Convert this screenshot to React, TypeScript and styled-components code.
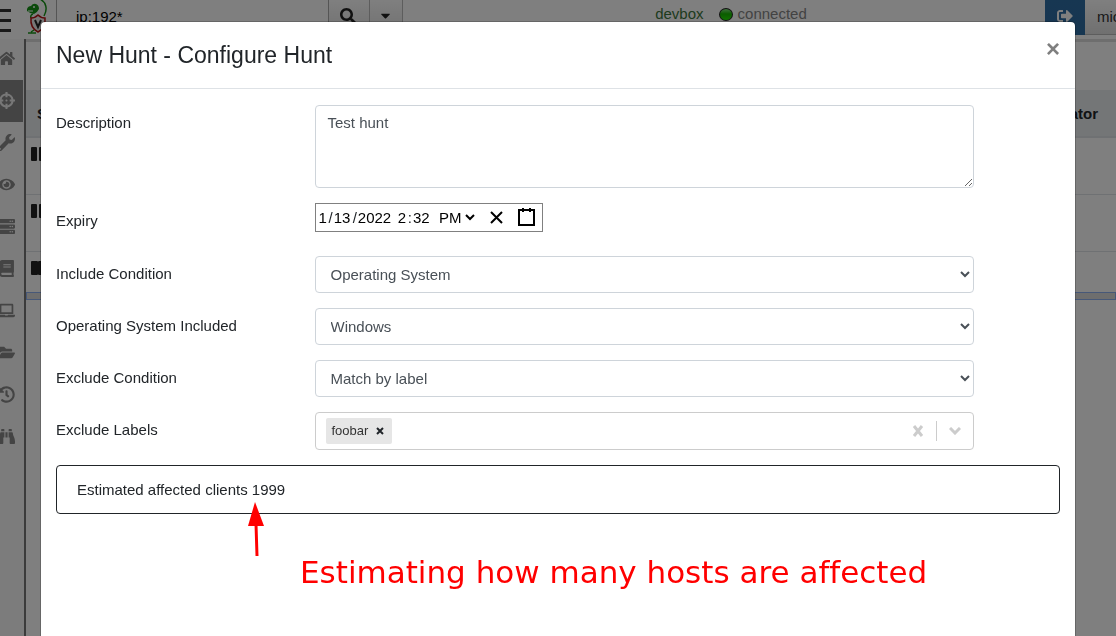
import React from "react";
import styled, { createGlobalStyle } from "styled-components";
import type { IconType } from "react-icons";
import {
  FaHome, FaCrosshairs, FaWrench, FaEye, FaServer, FaBook, FaLaptop,
  FaFolderOpen, FaHistory, FaBinoculars, FaSearch, FaSignOutAlt, FaCaretDown,
} from "react-icons/fa";

const GlobalStyle = createGlobalStyle`
  *, *::before, *::after { box-sizing: border-box; }
  body {
    margin: 0;
    overflow: hidden;
    background: #fff;
    color: #212529;
    font: 15px/22px "Liberation Sans", Arial, sans-serif;
  }
  button, input, select, textarea { font: inherit; }
`;

const Page = styled.div`
  display: flex;
  flex-direction: column;
  height: 100vh;
  overflow: hidden;
`;

const NavBar = styled.header`
  display: flex;
  align-items: flex-start;
  flex: none;
  height: 39px;
  background: #fff;
`;

const MenuButton = styled.button`
  display: flex;
  flex-direction: column;
  gap: 7px;
  width: 26px;
  height: 39px;
  padding: 9px 0 0;
  border: 0;
  background: none;
`;

const MenuBar = styled.span`
  width: 11px;
  height: 3px;
  background: #333;
`;

const LogoBox = styled.div`
  width: 30px;
  height: 36px;
`;

const SearchGroup = styled.form`
  display: flex;
  width: 347px;
  height: 36px;
`;

const SearchInput = styled.input`
  flex: 1;
  min-width: 0;
  padding: 0 19px 2px;
  border: 1px solid #aaa;
  border-top: 0;
  background: #fff;
  color: #000;
`;

const NavButton = styled.button<{ $width: number }>`
  display: flex;
  align-items: center;
  justify-content: center;
  width: ${(p) => p.$width}px;
  padding: 0 2px 5px 0;
  border: 0;
  border-right: 1px solid #bbb;
  background: linear-gradient(#fff, #e0e0e0);
  color: #222;
`;

const Status = styled.div`
  display: flex;
  flex: 1;
  justify-content: center;
  align-items: center;
  height: 28px;
  padding-left: 14px;
  color: #868686;
`;

const Host = styled.span`
  margin-right: 15px;
  color: #3c763d;
`;

const Led = styled.span`
  width: 14px;
  height: 13px;
  margin-right: 5px;
  border: 1px solid #222;
  border-radius: 50%;
  background: linear-gradient(#7de07a, #16b800 45%, #21e400);
`;

const LogoutButton = styled.button`
  width: 40px;
  height: 35px;
  padding: 0 0 4px;
  border: 0;
  background: linear-gradient(#2f6ea5, #2d6ca2);
  color: #fff;
  line-height: 0;
`;

const UserButton = styled.button`
  width: 31px;
  height: 35px;
  padding: 0 0 0 12px;
  border: 0;
  border-bottom: 1px solid #bbb;
  background: linear-gradient(#fff, #e0e0e0);
  color: #333;
  text-align: left;
  white-space: nowrap;
  overflow: hidden;
`;

const Main = styled.div`
  display: flex;
  flex: 1;
  min-height: 0;
`;

const SideBar = styled.nav`
  display: flex;
  flex-direction: column;
  width: 26px;
  flex: none;
  border-right: 2px solid #777;
  background: #f8f8f8;
`;

const SideLink = styled.a<{ $active?: boolean }>`
  display: flex;
  align-items: center;
  height: 42px;
  margin-right: 1px;
  padding-bottom: 2px;
  background: ${(p) => (p.$active ? "#888" : "transparent")};
  color: ${(p) => (p.$active ? "#eee" : "#888")};

  &:first-child { height: 41px; }
  svg { flex: none; width: auto; height: 17px; margin-left: -2px; }
`;

const Content = styled.main`
  flex: 1;
  border-top: 3px solid #ddd;
  background: #fff;
`;

const HuntTable = styled.table`
  width: 100%;
  margin-top: 48px;
  border-collapse: collapse;

  th {
    height: 47px;
    padding: 2px 18px 0 11px;
    background: #e9ecef;
    border-bottom: 2px solid #dee2e6;
    text-align: left;
  }
  th:last-child { text-align: right; }
  td { height: 57px; padding: 0 5px 24px; border-bottom: 1px solid #dee2e6; }
  tbody tr:last-child td { border-bottom: 0; }
`;

const StateMark = styled.span<{ $paused: boolean }>`
  display: flex;
  gap: ${(p) => (p.$paused ? 2 : 0)}px;
  width: 14px;
  height: 14px;

  &::before, &::after { content: ""; flex: 1; border-radius: 1px; background: #222; }
`;

const Splitter = styled.div`
  height: 8px;
  margin-top: -16px;
  border: 1px solid #8fb0f0;
  background: #ddd;
`;

const Overlay = styled.div`
  position: fixed;
  inset: 0;
  padding: 21px 40px 0;
  background: rgba(0, 0, 0, 0.5);
  overflow: hidden;
`;

const Dialog = styled.section`
  position: relative;
  min-height: 100vh;
  border: 1px solid rgba(0, 0, 0, 0.2);
  border-radius: 5px;
  background: #fff;
  background-clip: padding-box;
`;

const DialogHeader = styled.header`
  display: flex;
  justify-content: space-between;
  align-items: flex-start;
  height: 67px;
  padding: 15px;
  border-bottom: 1px solid #dee2e6;
`;

const Title = styled.h1`
  margin: 0;
  font-size: 23px;
  font-weight: 400;
  line-height: 36px;
`;

const CloseButton = styled.button`
  padding: 0;
  border: 0;
  background: none;
  color: #7f7f7f;
  font-size: 24px;
  font-weight: 700;
  line-height: 24px;
`;

const Form = styled.form`
  display: flex;
  flex-direction: column;
  gap: 15px;
  padding-top: 16px;
`;

const Row = styled.div<{ $tall?: boolean }>`
  display: grid;
  grid-template-columns: 3fr 8fr 1fr;
  min-height: ${(p) => (p.$tall ? 38 : 37)}px;
`;

const Label = styled.label`
  padding: 7px 15px;
`;

const Cell = styled.div`
  display: flex;
  align-items: flex-start;
  min-width: 0;
  padding: 0 15px;
`;

const TextArea = styled.textarea`
  width: 100%;
  height: 83px;
  padding: 6px 12px;
  border: 1px solid #ced4da;
  border-radius: 4px;
  background: #fff;
  color: #495057;
  resize: vertical;
`;

const Select = styled.select`
  width: 100%;
  height: 37px;
  padding: 6px 0 6px 11px;
  border: 1px solid #ced4da;
  border-radius: 4px;
  background: #fff;
  color: #495057;
`;

const DateBox = styled.div`
  display: flex;
  align-items: center;
  gap: 1px;
  height: 29px;
  padding: 0 1px 0 3px;
  border: 1px solid #808080;
`;

const DateInput = styled.input<{ $digits: number }>`
  width: ${(p) => p.$digits * 9}px;
  height: 22px;
  padding: 0;
  border: 0;
  background: none;
  color: #000;
`;

const Gap = styled.span`
  width: 2px;
`;

const AmPm = styled.select`
  margin: 0 3px;
  padding: 0;
  border: 0;
  background: none;
  color: #000;
`;

const IconButton = styled.button`
  display: flex;
  padding: 4px 5px;
  border: 0;
  background: none;

  svg { fill: none; stroke: #000; stroke-width: 2; }
`;

const MultiBox = styled.div`
  display: flex;
  align-items: center;
  width: 100%;
  height: 38px;
  padding-left: 10px;
  border: 1px solid #ccc;
  border-radius: 4px;
`;

const Tag = styled.span`
  display: flex;
  align-items: center;
  height: 26px;
  padding-left: 6px;
  border-radius: 2px;
  background: #e6e6e6;
  color: #333;
  font-size: 13px;
`;

const Remove = styled.button<{ $large?: boolean }>`
  width: ${(p) => (p.$large ? 36 : 24)}px;
  padding: 0;
  border: 0;
  background: none;
  color: ${(p) => (p.$large ? "#ccc" : "#212529")};
  line-height: 0;

  svg { fill: none; stroke: currentColor; stroke-width: ${(p) => (p.$large ? 3 : 2)}; }
`;

const MultiInput = styled.input`
  flex: 1;
  min-width: 0;
  border: 0;
  background: none;
`;

const Divider = styled.span`
  width: 1px;
  height: 20px;
  background: #ccc;
`;

const Estimate = styled.div`
  margin: 0 15px;
  padding: 13px 20px;
  height: 49px;
  border: 1px solid #212529;
  border-radius: 4px;
`;

const Arrow = styled.svg`
  position: absolute;
  left: 207px;
  top: 480px;
`;

const Annotation = styled.p`
  position: absolute;
  left: 259px;
  top: 530px;
  margin: 0;
  color: #f00;
  font: 31px/40px "DejaVu Sans", sans-serif;
  font-variant-ligatures: none;
  white-space: nowrap;
`;

const sideItems: { name: string; icon: IconType }[] = [
  { name: "Home", icon: FaHome },
  { name: "Hunts", icon: FaCrosshairs },
  { name: "Artifacts", icon: FaWrench },
  { name: "Events", icon: FaEye },
  { name: "Server", icon: FaServer },
  { name: "Notebooks", icon: FaBook },
  { name: "Host", icon: FaLaptop },
  { name: "Files", icon: FaFolderOpen },
  { name: "Collected", icon: FaHistory },
  { name: "Monitoring", icon: FaBinoculars },
];

function Logo() {
  return (
    <svg width="24" height="36" viewBox="0 0 24 36" aria-label="Velociraptor">
      <path d="M14 -1C20 2 22 9 18 16" fill="none" stroke="#179517" strokeWidth="1.5" />
      <path d="M1 9Q2 6 5 6Q7 3 10 4Q13 5 13 9Q11 13 8 14Q5 14 1 11Z" fill="#179517" />
      <path d="M2 11L7 11" fill="none" stroke="#fff" strokeWidth="1" />
      <circle cx="8" cy="7" r="1" fill="#fff" />
      <path d="M7 14Q4 15 5 18M8 30L5 32M2 33L10 33" fill="none" stroke="#179517" strokeWidth="1.5" />
      <path d="M12 15Q9 18 5 18Q4 28 12 32Q20 28 19 18Q15 18 12 15Z" fill="#eee" stroke="#b51212" strokeWidth="1.5" />
      <path d="M9 20L12 27L15 20" fill="none" stroke="#222" strokeWidth="2" />
    </svg>
  );
}

export default function App() {
  return (
    <>
      <GlobalStyle />
      <Page>
        <NavBar>
          <MenuButton aria-label="Menu"><MenuBar /><MenuBar /><MenuBar /></MenuButton>
          <LogoBox><Logo /></LogoBox>
          <SearchGroup>
            <SearchInput aria-label="Search clients" defaultValue="ip:192*" />
            <NavButton $width={41} type="button" aria-label="Search"><FaSearch size={16} /></NavButton>
            <NavButton $width={33} type="button" aria-label="Search options"><FaCaretDown size={15} /></NavButton>
          </SearchGroup>
          <Status><Host>devbox</Host><Led />connected</Status>
          <LogoutButton aria-label="Log out"><FaSignOutAlt size={16} /></LogoutButton>
          <UserButton>mic</UserButton>
        </NavBar>
        <Main>
          <SideBar>
            {sideItems.map(({ name, icon: Icon }) => (
              <SideLink key={name} href="#" aria-label={name} $active={name === "Hunts"}>
                <Icon />
              </SideLink>
            ))}
          </SideBar>
          <Content>
            <HuntTable>
              <thead><tr><th>State</th><th>Creator</th></tr></thead>
              <tbody>
                {[true, true, false].map((paused, i) => (
                  <tr key={i}><td><StateMark $paused={paused} /></td><td /></tr>
                ))}
              </tbody>
            </HuntTable>
            <Splitter />
          </Content>
        </Main>
      </Page>

      <Overlay>
        <Dialog role="dialog" aria-labelledby="dialog-title">
          <DialogHeader>
            <Title id="dialog-title">New Hunt - Configure Hunt</Title>
            <CloseButton aria-label="Close">×</CloseButton>
          </DialogHeader>
          <Form>
            <Row>
              <Label htmlFor="description">Description</Label>
              <Cell><TextArea id="description" defaultValue="Test hunt" /></Cell>
            </Row>
            <Row $tall>
              <Label htmlFor="month">Expiry</Label>
              <Cell>
                <DateBox>
                  <DateInput id="month" $digits={1} defaultValue="1" />/
                  <DateInput aria-label="Day" $digits={2} defaultValue="13" />/
                  <DateInput aria-label="Year" $digits={4} defaultValue="2022" /><Gap />
                  <DateInput aria-label="Hour" $digits={1} defaultValue="2" />:
                  <DateInput aria-label="Minute" $digits={2} defaultValue="32" />
                  <AmPm aria-label="AM or PM" defaultValue="PM"><option>AM</option><option>PM</option></AmPm>
                  <IconButton type="button" aria-label="Clear date">
                    <svg width="19" height="19"><path d="M4 4L15 15M15 4L4 15" /></svg>
                  </IconButton>
                  <IconButton type="button" aria-label="Open calendar">
                    <svg width="19" height="19"><path d="M2 2H17V17H2ZM6 0V4M13 0V4" /></svg>
                  </IconButton>
                </DateBox>
              </Cell>
            </Row>
            <Row>
              <Label htmlFor="include">Include Condition</Label>
              <Cell><Select id="include"><option>Operating System</option></Select></Cell>
            </Row>
            <Row>
              <Label htmlFor="os">Operating System Included</Label>
              <Cell><Select id="os"><option>Windows</option></Select></Cell>
            </Row>
            <Row>
              <Label htmlFor="exclude">Exclude Condition</Label>
              <Cell><Select id="exclude"><option>Match by label</option></Select></Cell>
            </Row>
            <Row $tall>
              <Label htmlFor="labels">Exclude Labels</Label>
              <Cell>
                <MultiBox>
                  <Tag>
                    foobar
                    <Remove type="button" aria-label="Remove foobar">
                      <svg width="8" height="8"><path d="M1 1L7 7M7 1L1 7" /></svg>
                    </Remove>
                  </Tag>
                  <MultiInput id="labels" />
                  <Remove $large type="button" aria-label="Clear labels">
                    <svg width="12" height="12"><path d="M2 1L10 11M10 1L2 11" /></svg>
                  </Remove>
                  <Divider />
                  <Remove $large type="button" aria-label="Show labels">
                    <svg width="12" height="8"><path d="M1 1L6 6L11 1" /></svg>
                  </Remove>
                </MultiBox>
              </Cell>
            </Row>
            <Estimate>Estimated affected clients 1999</Estimate>
          </Form>
          <Arrow width="20" height="56" aria-hidden="true">
            <path d="M7 0L16 24H0Z" fill="#f00" />
            <path d="M8 22L9 54" stroke="#f00" strokeWidth="3" />
          </Arrow>
          <Annotation>Estimating how many hosts are affected</Annotation>
        </Dialog>
      </Overlay>
    </>
  );
}
